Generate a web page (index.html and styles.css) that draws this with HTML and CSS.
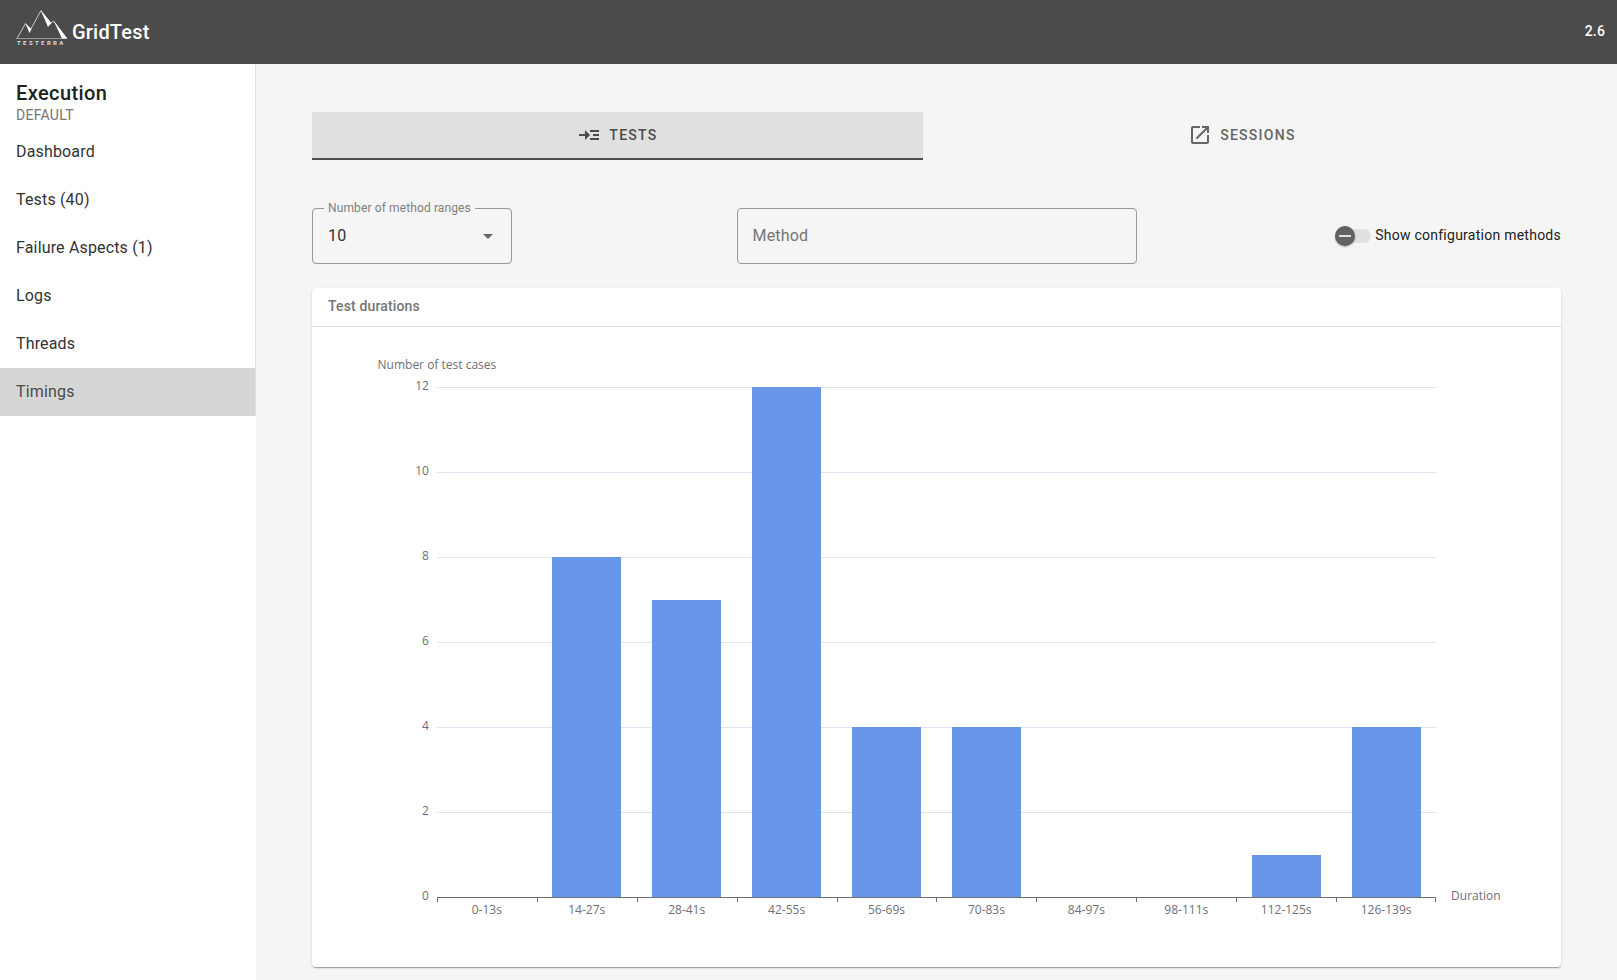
FILE: index.html
```html
<!DOCTYPE html>
<html lang="en">
  <head>
    <meta charset="utf-8">
    <title>GridTest - Timings</title>
    <link rel="stylesheet" href="styles.css">
  </head>
  <body>
    <header class="topbar">
      <a class="brand" href="#">
        <svg class="logo" width="52" height="38" viewBox="0 0 52 38" aria-hidden="true">
          <path d="M1 29.500 9.500 14.500 14 21.500 25 1.500 32.500 16 37.500 12 51 29.500" fill="none" stroke="#fff" stroke-width="0.700"/>
          <path d="M0 29.500H51" stroke="#999" stroke-width="1"/>
          <path d="M9.500 14.500 15.500 20 13.500 24ZM25 1.500 35.500 14 32 18ZM37.500 11.500 51 29.500 46 29.500Z" fill="#fff"/>
          <text class="logo-text" x="1" y="36">TESTERRA</text>
        </svg>
        <span>GridTest</span>
      </a>
      <span class="version">2.6</span>
    </header>

    <div class="layout">
      <aside class="sidebar">
        <div class="menu">
          <div class="run">
            <h1>Execution</h1>
            <p>DEFAULT</p>
          </div>
          <nav>
            <a href="#">Dashboard</a>
            <a href="#">Tests (40)</a>
            <a href="#">Failure Aspects (1)</a>
            <a href="#">Logs</a>
            <a href="#">Threads</a>
            <a href="#" class="active" aria-current="page">Timings</a>
          </nav>
        </div>
      </aside>

      <main class="content">
        <div class="tabs" role="tablist">
          <button class="tab active" role="tab" aria-selected="true">
            <svg width="24" height="24" viewBox="0 0 24 24"><path d="M22 7h-9v2h9V7zm0 8h-9v2h9v-2zm0-4h-6v2h6v-2zm-9 1L8 7v4H2v2h6v4l5-5z"/></svg>
            TESTS
          </button>
          <button class="tab" role="tab" aria-selected="false">
            <svg width="24" height="24" viewBox="0 0 24 24"><path d="M19 19H5V5h7V3H5c-1.110 0-2 .9-2 2v14c0 1.100.89 2 2 2h14c1.100 0 2-.9 2-2v-7h-2v7zM14 3v2h3.590l-9.830 9.830 1.410 1.410L19 6.410V10h2V3h-7z"/></svg>
            SESSIONS
          </button>
        </div>

        <form class="filters">
          <div class="field select">
            <label for="ranges">Number of method ranges</label>
            <select id="ranges">
              <option>5</option>
              <option selected>10</option>
              <option>15</option>
              <option>20</option>
            </select>
            <svg class="arrow" width="10" height="5" viewBox="0 0 10 5"><path d="M0 0h10L5 5z"/></svg>
          </div>
          <div class="field method">
            <input id="method" type="text" placeholder="Method" aria-label="Method">
          </div>
          <div class="toggle">
            <input id="config" class="switch" type="checkbox" role="switch">
            <label for="config">Show configuration methods</label>
          </div>
        </form>

        <section class="card">
          <h2>Test durations</h2>
          <div class="chart">
            <div class="y-name"><span>Number of test cases</span></div>
            <div class="y-axis">
              <span>12</span><span>10</span><span>8</span><span>6</span><span>4</span><span>2</span><span>0</span>
            </div>
            <div class="lines">
              <i></i><i></i><i></i><i></i><i></i><i></i>
            </div>
            <div class="bars">
              <div class="bar" style="height: 0%"></div>
              <div class="bar" style="height: 66.667%"></div>
              <div class="bar" style="height: 58.333%"></div>
              <div class="bar" style="height: 100%"></div>
              <div class="bar" style="height: 33.333%"></div>
              <div class="bar" style="height: 33.333%"></div>
              <div class="bar" style="height: 0%"></div>
              <div class="bar" style="height: 0%"></div>
              <div class="bar" style="height: 8.333%"></div>
              <div class="bar" style="height: 33.333%"></div>
            </div>
            <div class="x-name">Duration</div>
            <div class="x-axis">
              <span>0-13s</span>
              <span>14-27s</span>
              <span>28-41s</span>
              <span>42-55s</span>
              <span>56-69s</span>
              <span>70-83s</span>
              <span>84-97s</span>
              <span>98-111s</span>
              <span>112-125s</span>
              <span>126-139s</span>
            </div>
          </div>
        </section>
      </main>
    </div>
  </body>
</html>
```
FILE: styles.css
```css
* { box-sizing: border-box; }

body {
  margin: 0;
  min-height: 100vh;
  display: flex;
  flex-direction: column;
  background: #f5f5f5;
  color: #212121;
  font-family: Roboto, "Liberation Sans", sans-serif;
  font-size: 14px;
}

a { color: inherit; text-decoration: none; }
button, input, select { font: inherit; color: inherit; }

.topbar {
  display: flex;
  align-items: center;
  justify-content: space-between;
  height: 64px;
  padding: 0 12px 0 16px;
  background: #4b4b4b;
  color: #fff;
  font-weight: 500;
}
.brand { display: flex; align-items: center; gap: 4px; font-size: 20px; letter-spacing: 0.01em; }
.logo { margin-bottom: 8px; }
.logo-text { font-size: 6px; font-weight: 700; letter-spacing: 0.4em; fill: #ddd; }
.version { padding-bottom: 2px; letter-spacing: 0.01em; }

.layout { flex: 1; display: flex; }

.sidebar { width: 256px; background: #fff; }
.menu { border-right: 1px solid #e0e0e0; }
.run { height: 64px; padding: 16px 16px 0; }
.run h1 { margin: 0; font-size: 20px; line-height: 26px; font-weight: 500; letter-spacing: 0.02em; }
.run p { margin: 0; line-height: 18px; letter-spacing: 0.02em; color: #757575; }
.sidebar nav a {
  display: flex;
  align-items: center;
  height: 48px;
  padding: 0 16px 2px;
  font-size: 16px;
  letter-spacing: 0.01em;
  color: #333;
}
.sidebar nav a.active { background: #d6d6d6; color: #4b4b4b; }

.content { flex: 1; min-width: 0; padding: 48px 56px 12px; }

.tabs { display: flex; }
.tab {
  flex: 1 1 auto;
  display: flex;
  align-items: center;
  justify-content: center;
  gap: 8px;
  height: 48px;
  padding: 0 24px;
  border: 0;
  border-bottom: 2px solid transparent;
  background: none;
  color: #666;
  fill: #666;
  font-weight: 500;
  letter-spacing: 0.09em;
}
.tab.active { background: #e0e0e0; border-color: #4b4b4b; color: #4b4b4b; fill: #4b4b4b; }

.filters {
  display: grid;
  grid-template-columns: 1fr auto 1fr;
  align-items: center;
  margin: 48px 0 24px;
}
.field { position: relative; height: 56px; }
.field.select { width: 200px; }
.field.method { width: 400px; }
.field select,
.field input {
  width: 100%;
  height: 100%;
  padding: 0 15px 2px;
  border: 1px solid #999;
  border-radius: 4px;
  background: transparent;
  appearance: none;
  outline: none;
  font-size: 16px;
  letter-spacing: 0.01em;
}
.field select { color: #333; }
.field input::placeholder { color: #757575; }
/* label sits in the notch of the outline */
.field label {
  position: absolute;
  top: -8px;
  left: 12px;
  padding: 0 4px;
  background: #f5f5f5;
  color: #808080;
  font-size: 12px;
  line-height: 16px;
  letter-spacing: 0.01em;
}
.field .arrow { position: absolute; top: 26px; right: 19px; fill: #666; pointer-events: none; }

.toggle { display: flex; align-items: center; justify-self: end; gap: 4px; letter-spacing: 0.018em; }
.toggle label { padding-bottom: 2px; }
.switch {
  appearance: none;
  display: flex;
  align-items: center;
  width: 36px;
  height: 14px;
  margin: 0;
  border-radius: 7px;
  background: #e0e0e0;
}
.switch::before {
  content: "";
  flex: none;
  width: 20px;
  height: 20px;
  border-radius: 50%;
  background: linear-gradient(#e0e0e0, #e0e0e0) center / 12px 2px no-repeat #616161;
  box-shadow: 0 1px 2px rgba(0, 0, 0, 0.3);
}
.switch:checked { justify-content: flex-end; }

.card {
  background: #fff;
  border-radius: 4px;
  box-shadow: 0 2px 1px -1px rgba(0, 0, 0, 0.2), 0 1px 1px rgba(0, 0, 0, 0.14), 0 1px 3px rgba(0, 0, 0, 0.12);
}
.card h2 {
  margin: 0;
  padding: 0 16px 2px;
  border-bottom: 1px solid #e0e0e0;
  color: #757575;
  font-size: 14px;
  font-weight: 500;
  line-height: 36px;
  letter-spacing: 0.01em;
}

.chart {
  display: grid;
  grid-template-columns: 10% 80% 10%;
  grid-template-rows: 60px 510px 70px;
  color: #6e7079;
  font-family: "Open Sans", "Noto Sans", sans-serif;
  font-size: 12px;
  line-height: 16px;
}
.y-name {
  grid-area: 1 / 1 / 2 / 2;
  display: flex;
  align-items: flex-end;
  justify-content: center;
  width: 200%;
  padding-bottom: 14px;
}
.y-axis {
  grid-area: 2 / 1;
  display: flex;
  flex-direction: column;
  justify-content: space-between;
  margin: -9px 0 -7px;
  padding-right: 8px;
  text-align: right;
}
.lines { grid-area: 2 / 2; display: flex; flex-direction: column; }
.lines i { flex: 1; border-top: 1px solid #e0e6f1; }
.bars {
  grid-area: 2 / 2;
  display: grid;
  grid-template-columns: repeat(10, 1fr);
  align-items: end;
  justify-items: center;
}
.bar { width: 69%; background: #6897ea; }
.x-name { grid-area: 2 / 3; align-self: end; padding-left: 15px; margin-bottom: -7px; }
.x-axis {
  grid-area: 3 / 2;
  display: grid;
  grid-template-columns: repeat(10, 1fr);
  align-self: start;
  border-top: 1px solid #6e7079;
  text-align: center;
}
/* tick marks between the categories */
.x-axis span { padding-top: 4px; background: linear-gradient(#6e7079, #6e7079) left top / 1px 4px no-repeat; }
.x-axis span:last-child {
  background: linear-gradient(#6e7079, #6e7079) left top / 1px 4px no-repeat, linear-gradient(#6e7079, #6e7079) right top / 1px 4px no-repeat;
}
```
